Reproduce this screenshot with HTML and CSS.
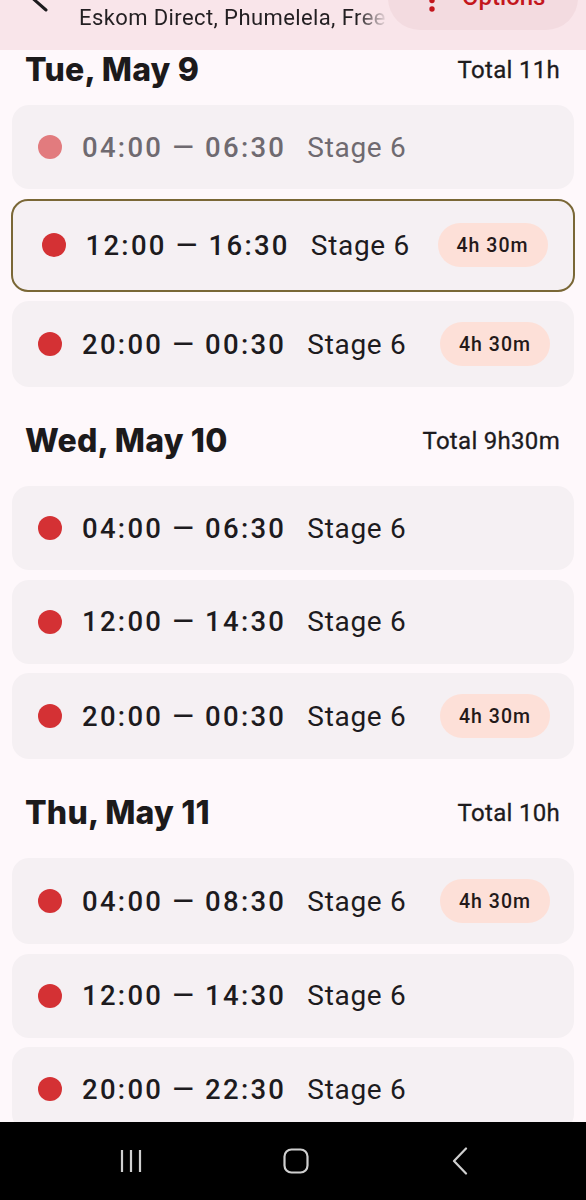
FILE: index.html
```html
<!DOCTYPE html>
<html lang="en">
<head>
<meta charset="utf-8">
<title>Schedule</title>
<link rel="stylesheet" href="styles.css">
</head>
<body>
<header class="appbar">
  <div class="appbar-inner">
    <div class="back">
      <svg width="79" height="64" viewBox="0 0 79 64" aria-hidden="true">
        <path d="M30 30 L46 44 M30 30 L46 16 M30 30 L60 30" fill="none" stroke="#1d1b1e" stroke-width="3" stroke-linecap="round"/>
      </svg>
    </div>
    <div class="titles">
      <div class="subtitle">Eskom Direct, Phumelela, Free State</div>
    </div>
    <button class="options">
      <svg class="dots" width="8" height="26" viewBox="0 0 8 26" aria-hidden="true">
        <circle cx="4" cy="4" r="2.7" fill="#c3161d"/>
        <circle cx="4" cy="12.5" r="2.7" fill="#c3161d"/>
        <circle cx="4" cy="21" r="2.7" fill="#c3161d"/>
      </svg>
      <span>Options</span>
    </button>
  </div>
</header>

<main class="list">
  <section class="day day-first">
    <div class="day-head">
      <h2>Tue, May 9</h2>
      <span class="total">Total 11h</span>
    </div>
    <div class="slot past">
      <span class="dot"></span><span class="time">04:00 — 06:30</span><span class="stage">Stage 6</span>
    </div>
    <div class="slot current">
      <span class="dot"></span><span class="time">12:00 — 16:30</span><span class="stage">Stage 6</span><span class="badge">4h 30m</span>
    </div>
    <div class="slot">
      <span class="dot"></span><span class="time">20:00 — 00:30</span><span class="stage">Stage 6</span><span class="badge">4h 30m</span>
    </div>
  </section>

  <section class="day">
    <div class="day-head">
      <h2>Wed, May 10</h2>
      <span class="total">Total 9h30m</span>
    </div>
    <div class="slot">
      <span class="dot"></span><span class="time">04:00 — 06:30</span><span class="stage">Stage 6</span>
    </div>
    <div class="slot">
      <span class="dot"></span><span class="time">12:00 — 14:30</span><span class="stage">Stage 6</span>
    </div>
    <div class="slot">
      <span class="dot"></span><span class="time">20:00 — 00:30</span><span class="stage">Stage 6</span><span class="badge">4h 30m</span>
    </div>
  </section>

  <section class="day">
    <div class="day-head">
      <h2>Thu, May 11</h2>
      <span class="total">Total 10h</span>
    </div>
    <div class="slot">
      <span class="dot"></span><span class="time">04:00 — 08:30</span><span class="stage">Stage 6</span><span class="badge">4h 30m</span>
    </div>
    <div class="slot">
      <span class="dot"></span><span class="time">12:00 — 14:30</span><span class="stage">Stage 6</span>
    </div>
    <div class="slot">
      <span class="dot"></span><span class="time">20:00 — 22:30</span><span class="stage">Stage 6</span>
    </div>
  </section>
</main>

<nav class="navbar">
  <svg width="24" height="24" viewBox="0 0 24 24" aria-hidden="true">
    <path d="M3 1 V23 M12 1 V23 M21 1 V23" stroke="#cfcfcf" stroke-width="2.2" fill="none"/>
  </svg>
  <svg width="28" height="28" viewBox="0 0 28 28" aria-hidden="true">
    <rect x="2.5" y="2.5" width="23" height="23" rx="7" stroke="#cfcfcf" stroke-width="2.2" fill="none"/>
  </svg>
  <svg width="18" height="28" viewBox="0 0 18 28" aria-hidden="true">
    <path d="M15 1.5 L3 14 L15 26.5" stroke="#cfcfcf" stroke-width="2.2" fill="none" stroke-linecap="round" stroke-linejoin="round"/>
  </svg>
</nav>
</body>
</html>
```

FILE: styles.css
```css
* { box-sizing: border-box; }

html, body {
  margin: 0;
  padding: 0;
}

body {
  width: 586px;
  height: 1200px;
  overflow: hidden;
  background: #fef8fb;
  font-family: Roboto, "Liberation Sans", sans-serif;
  color: #1d1b1e;
}

/* ---------- app bar ---------- */
.appbar {
  height: 50px;
  overflow: hidden;
  background: #f9e5ea;
}

.appbar-inner {
  display: flex;
  align-items: flex-start;
  margin-top: -34px;
  height: 84px;
}

.back {
  width: 79px;
  flex: none;
}

.back svg { display: block; }

.titles {
  width: 309px;
  flex: none;
  overflow: hidden;
  white-space: nowrap;
  padding-top: 38px;
  -webkit-mask-image: linear-gradient(to right, #000 90%, transparent 100%);
  mask-image: linear-gradient(to right, #000 90%, transparent 100%);
}

.subtitle {
  font-size: 22px;
  line-height: 28px;
  letter-spacing: 0.4px;
  color: #231f22;
}

.options {
  flex: none;
  width: 190px;
  height: 64px;
  border: 0;
  border-radius: 32px;
  background: #f3dbe0;
  display: flex;
  align-items: center;
  gap: 26px;
  padding: 0 0 0 40px;
  margin-top: 0;
  font-family: Roboto, "Liberation Sans", sans-serif;
  font-size: 24px;
  font-weight: 500;
  color: #c3161d;
}

.options .dots { display: block; flex: none; margin-top: 6px; }
.options span { line-height: 30px; margin-top: -2px; }

/* ---------- list ---------- */
.list {
  display: flex;
  flex-direction: column;
}

.day {
  display: flex;
  flex-direction: column;
  gap: 9.5px;
}

.day-head {
  display: flex;
  justify-content: space-between;
  align-items: center;
  padding: 38px 26px 19.5px 25px;
  height: 89.5px;
}

.day-first .day-head {
  padding-top: 4px;
  padding-bottom: 9.5px;
  height: 45.5px;
}

.day-head h2 {
  margin: 0;
  font-family: Inter, "Open Sans", sans-serif;
  font-weight: 800;
  font-size: 32px;
  line-height: 32px;
  letter-spacing: 0.2px;
  color: #1c1a1b;
}

.total {
  font-size: 24px;
  line-height: 32px;
  font-weight: 400;
  letter-spacing: 0.3px;
  color: #1d1b1e;
  -webkit-text-stroke: 0.3px #1d1b1e;
}

/* ---------- slots ---------- */
.slot {
  margin: 0 12px;
  min-height: 84px;
  padding: 21px 24px 21px 26px;
  border-radius: 17px;
  background: #f5f0f3;
  display: flex;
  align-items: center;
}

.dot {
  width: 24px;
  height: 24px;
  border-radius: 50%;
  background: #d43134;
  flex: none;
  margin-right: 20px;
}

.time {
  font-size: 27.5px;
  font-weight: 500;
  letter-spacing: 2.3px;
  color: #1d1b1e;
  white-space: nowrap;
}

.stage {
  margin-left: 21px;
  font-size: 28px;
  letter-spacing: 0.7px;
  color: #1d1b1e;
  white-space: nowrap;
}

.badge {
  margin-left: auto;
  width: 110px;
  height: 44px;
  border-radius: 22px;
  background: #fde0d8;
  display: flex;
  align-items: center;
  justify-content: center;
  font-size: 19.5px;
  font-weight: 500;
  letter-spacing: 1px;
  color: #24191a;
}

.slot.past .dot { background: #e27b7e; }
.slot.past .time,
.slot.past .stage { color: #6f6a70; }

.slot.current {
  margin: 0 11px;
  min-height: 93px;
  border: 2.5px solid #7a6736;
  padding: 0 25.5px 0 28.5px;
}

/* ---------- system nav ---------- */
.navbar {
  position: fixed;
  left: 0;
  right: 0;
  bottom: 0;
  height: 78px;
  background: #000;
  display: grid;
  grid-template-columns: 1fr 1fr 1fr;
  align-items: center;
  justify-items: center;
  padding: 0 43.75px 0 48.75px;
}
```
